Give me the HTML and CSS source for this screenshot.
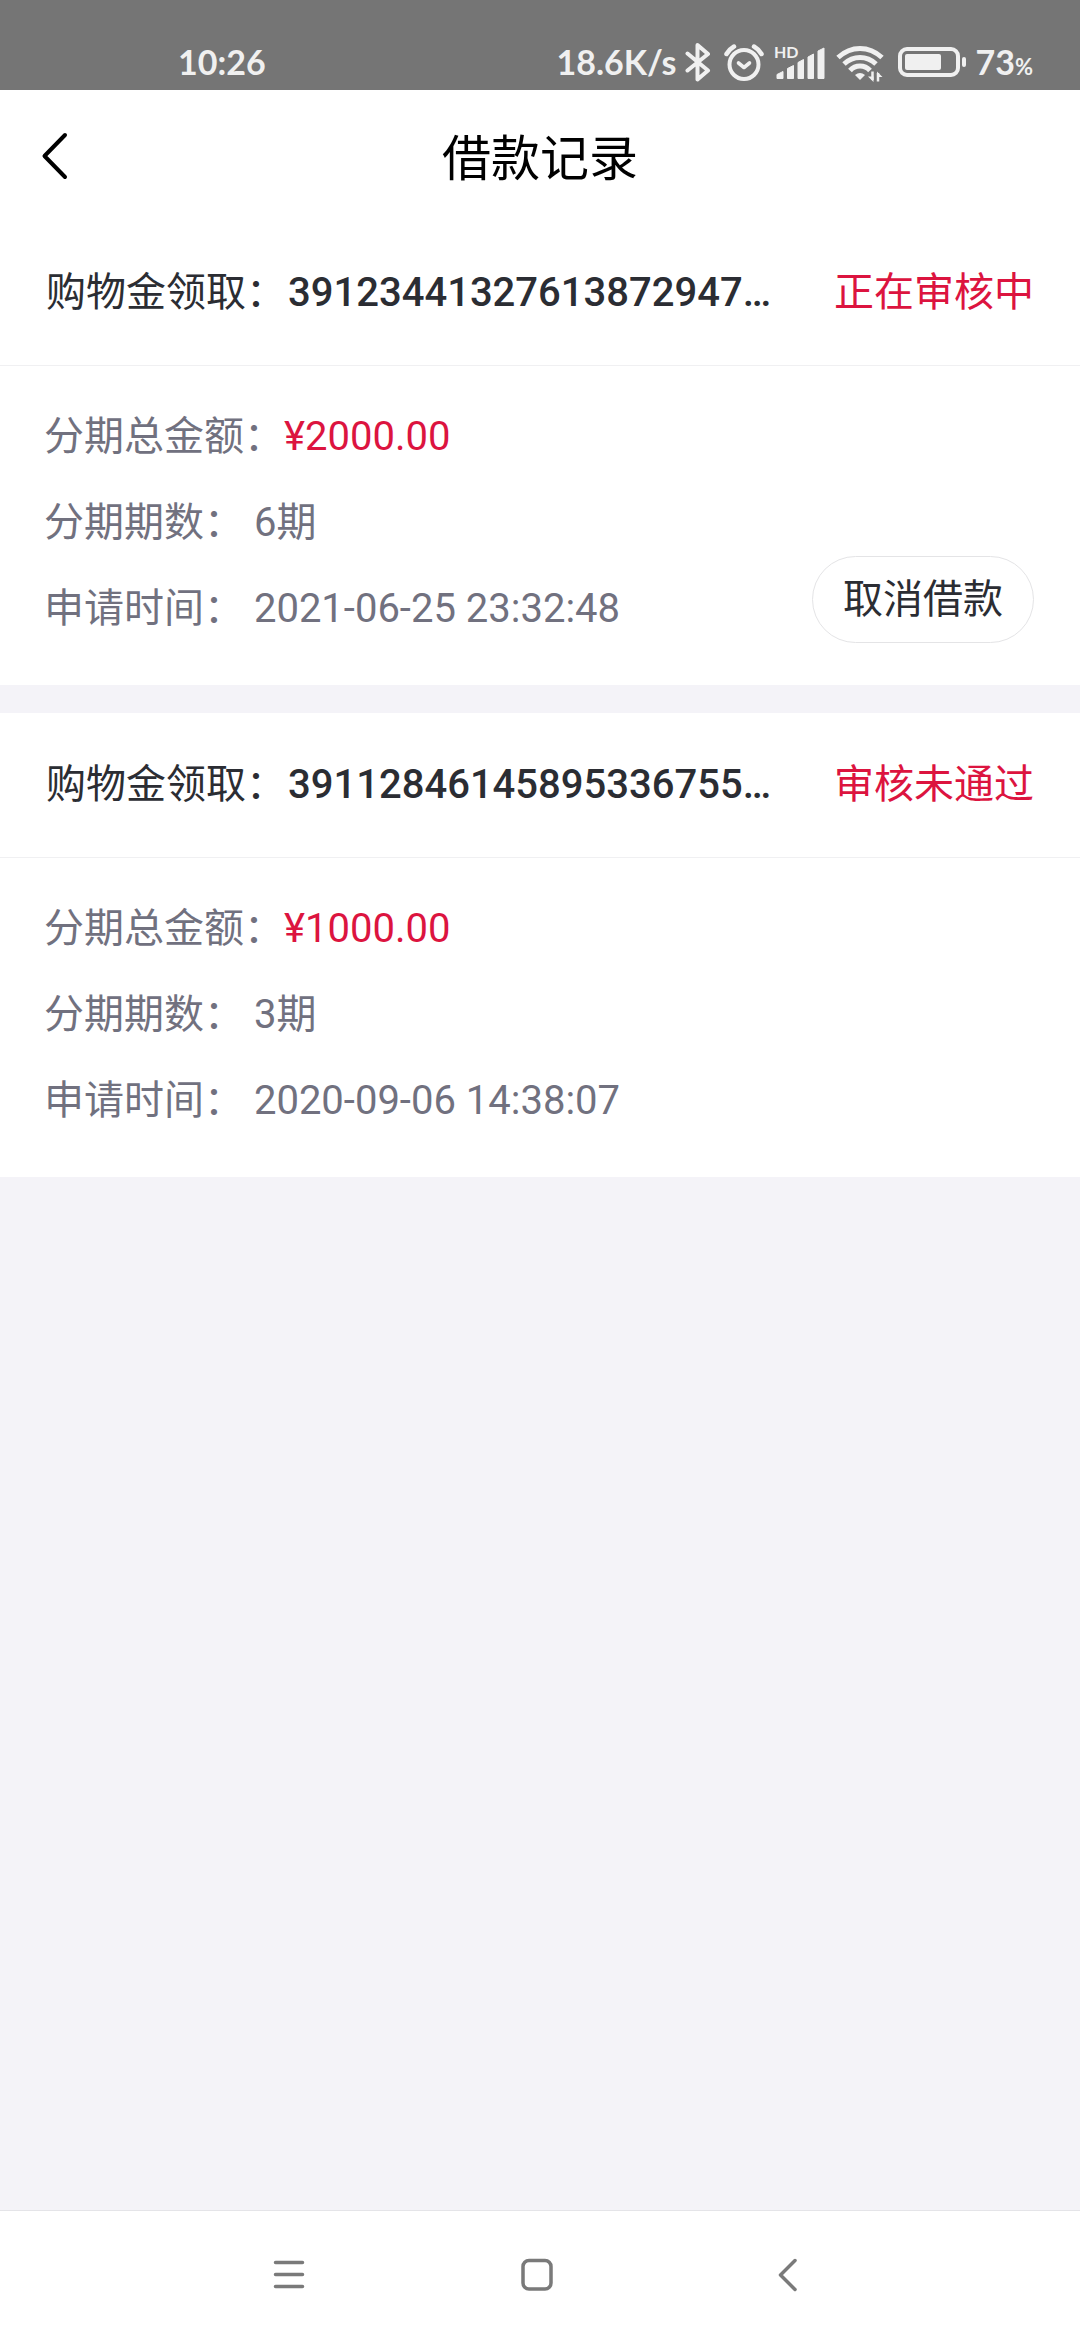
FILE: index.html
```html
<!DOCTYPE html>
<html lang="zh-CN">
<head>
  <meta charset="UTF-8">
  <meta name="viewport" content="width=device-width, initial-scale=1.0">
  <title>借款记录</title>
  <link rel="stylesheet" href="styles.css">
</head>
<body>
  <div class="status-bar">
    <span class="time">10:26</span>
    <div class="status-right">
      <span class="speed">18.6K/s</span>
      <!-- bluetooth -->
      <svg class="ic-bt" width="26" height="40" viewBox="0 0 26 40" fill="none" stroke="#f0f0f0" stroke-width="4" stroke-linecap="round" stroke-linejoin="round">
        <path d="M2.5 11.5L23 28.5L12.500 37.500V3L23 12L2.500 28.500"/>
      </svg>
      <!-- alarm -->
      <svg class="ic-alarm" width="40" height="40" viewBox="0 0 40 40" fill="none" stroke="#f0f0f0" stroke-width="4" stroke-linecap="round" stroke-linejoin="round">
        <circle cx="20" cy="22.500" r="14.500"/>
        <path d="M14.500 21L20 25.500L25.500 21" stroke-width="3.600"/>
        <path d="M2.500 12Q5.500 7 10 4.500M30 4.500Q34.500 7 37.500 12" stroke-width="4.500"/>
      </svg>
      <!-- signal -->
      <svg class="ic-signal" width="52" height="40" viewBox="0 0 52 40" fill="#f0f0f0">
        <text class="hd" x="0" y="15.500">HD</text>
        <path d="M3 32.500L9 29.500V36.500H3zM13.500 26.500L19.500 23.500V36.500H13.500zM24 20.500L29.500 17.500V36.500H24zM34 15L39.500 12V36.500H34zM44 9L50 6V36.500H44z" stroke="#f0f0f0" stroke-width="1" stroke-linejoin="round"/>
      </svg>
      <!-- wifi -->
      <svg class="ic-wifi" width="48" height="40" viewBox="0 0 48 40" fill="none" stroke="#f0f0f0" stroke-width="5">
        <path d="M2 15.500Q12 6.500 24 6.500T46 15.500M8 22Q15 15.500 24 15.500T40 22M14 28.500Q18 24 24 24T34 28.500"/>
        <path d="M19 33Q24 29 29 33L24 38z" fill="#f0f0f0" stroke="none"/>
        <path d="M36.500 29.500V38M42 39.500V31" stroke-width="2.500"/>
        <path d="M32 34.500H37.500V40zM41 29.500L46.500 35H41z" fill="#f0f0f0" stroke="none"/>
      </svg>
      <!-- battery -->
      <svg class="ic-battery" width="70" height="40" viewBox="0 0 70 40" fill="#f0f0f0">
        <rect x="2" y="7" width="58" height="26" rx="7" fill="none" stroke="#f0f0f0" stroke-width="4"/>
        <rect x="7" y="12" width="36" height="16" rx="2"/>
        <rect x="64" y="15" width="4" height="10" rx="2"/>
      </svg>
      <span class="percent">73<small>%</small></span>
    </div>
  </div>

  <header class="header">
    <button class="back" aria-label="返回">
      <svg width="32" height="50" viewBox="0 0 32 50" fill="none" stroke="#000" stroke-width="4" stroke-linecap="round" stroke-linejoin="round">
        <path d="M25 4L4.500 25L25 46"/>
      </svg>
    </button>
    <h1>借款记录</h1>
  </header>

  <main class="list">
    <section class="card">
      <div class="card-head">
        <h2>购物金领取：<b>39123441327613872947…</b></h2>
        <span class="state">正在审核中</span>
      </div>
      <div class="card-body">
        <div class="info">
          <p>分期总金额：<span class="money">¥2000.00</span></p>
          <p>分期期数： 6期</p>
          <p>申请时间： 2021-06-25 23:32:48</p>
        </div>
        <button class="cancel">取消借款</button>
      </div>
    </section>

    <section class="card">
      <div class="card-head">
        <h2>购物金领取：<b>39112846145895336755…</b></h2>
        <span class="state">审核未通过</span>
      </div>
      <div class="card-body">
        <div class="info">
          <p>分期总金额：<span class="money">¥1000.00</span></p>
          <p>分期期数： 3期</p>
          <p>申请时间： 2020-09-06 14:38:07</p>
        </div>
      </div>
    </section>
  </main>

  <nav class="nav-bar">
    <button aria-label="菜单">
      <svg width="40" height="40" viewBox="0 0 40 40" stroke="#7a7a7a" stroke-width="3.500" stroke-linecap="round">
        <path d="M6.500 7.500H33.500M6.500 19.500H33.500M6.500 31.500H33.500"/>
      </svg>
    </button>
    <button aria-label="主页">
      <svg width="40" height="40" viewBox="0 0 40 40" fill="none" stroke="#7a7a7a" stroke-width="3.500">
        <rect x="6" y="5.500" width="28" height="28.500" rx="6"/>
      </svg>
    </button>
    <button aria-label="返回">
      <svg width="40" height="40" viewBox="0 0 40 40" fill="none" stroke="#7a7a7a" stroke-width="3.500" stroke-linecap="round" stroke-linejoin="round">
        <path d="M30 5.500L15.500 20L30 34.500"/>
      </svg>
    </button>
  </nav>
</body>
</html>
```

FILE: styles.css
```css
* {
  margin: 0;
  padding: 0;
  box-sizing: border-box;
}
body {
  display: flex;
  flex-direction: column;
  min-height: 100vh;
  background: #f4f3f8;
  color: #2b2d33;
  font-family: Roboto, "Noto Sans CJK SC", sans-serif;
  font-size: 40px;
}
button {
  border: none;
  background: none;
  font: inherit;
  color: inherit;
  cursor: pointer;
}
svg {
  display: block;
}

/* status bar */
.status-bar {
  display: flex;
  justify-content: space-between;
  height: 90px;
  padding: 42px 47px 8px 178px;
  background: #757575;
  color: #f0f0f0;
  font-family: Lato, sans-serif;
  font-size: 34px;
  font-weight: 700;
  line-height: 40px;
}
.status-right {
  display: flex;
}
.ic-bt {
  margin-left: 8px;
}
.ic-alarm {
  margin-left: 13px;
}
.ic-signal {
  margin-left: 10px;
}
.ic-wifi {
  margin-left: 10px;
}
.ic-battery {
  margin-left: 14px;
}
.percent {
  margin-left: 8px;
}
.percent small {
  font-size: 22px;
}
.hd {
  font-size: 16px;
  font-weight: 700;
}

/* title bar */
.header {
  display: flex;
  align-items: center;
  height: 131px;
  padding: 0 40px;
  background: #fff;
  color: #000;
}
.header h1 {
  flex: 1;
  padding: 0 32px 2px 0;
  font-size: 49px;
  font-weight: 400;
  text-align: center;
}

/* records */
.list {
  flex: 1;
}
.card {
  margin-bottom: 28px;
  background: #fff;
}
.card-head {
  display: flex;
  align-items: center;
  justify-content: space-between;
  gap: 40px;
  height: 145px;
  padding: 0 46px 8px;
  border-bottom: 1px solid #f0f0f2;
}
.card-head h2 {
  flex: 1;
  font-size: 40px;
  font-weight: 400;
  white-space: nowrap;
}
.card-head b {
  margin-left: 2px;
  font-weight: 500;
}
.state, .money {
  color: #dc143f;
}
.card-body {
  display: flex;
  align-items: flex-end;
  justify-content: space-between;
  padding: 28px 46px 33px 44px;
  color: #71717f;
}
.info p {
  line-height: 86px;
}
.cancel {
  height: 87px;
  margin-bottom: 9px;
  padding: 0 30px 8px;
  border: 1px solid #e4e4e6;
  border-radius: 44px;
  color: #2b2d33;
}

/* system navigation */
.nav-bar {
  display: flex;
  justify-content: center;
  gap: 208px;
  height: 130px;
  padding: 44px 6px 0 0;
  border-top: 1px solid #e4e4e8;
  background: #fff;
}
.nav-bar button {
  height: 40px;
}
```
